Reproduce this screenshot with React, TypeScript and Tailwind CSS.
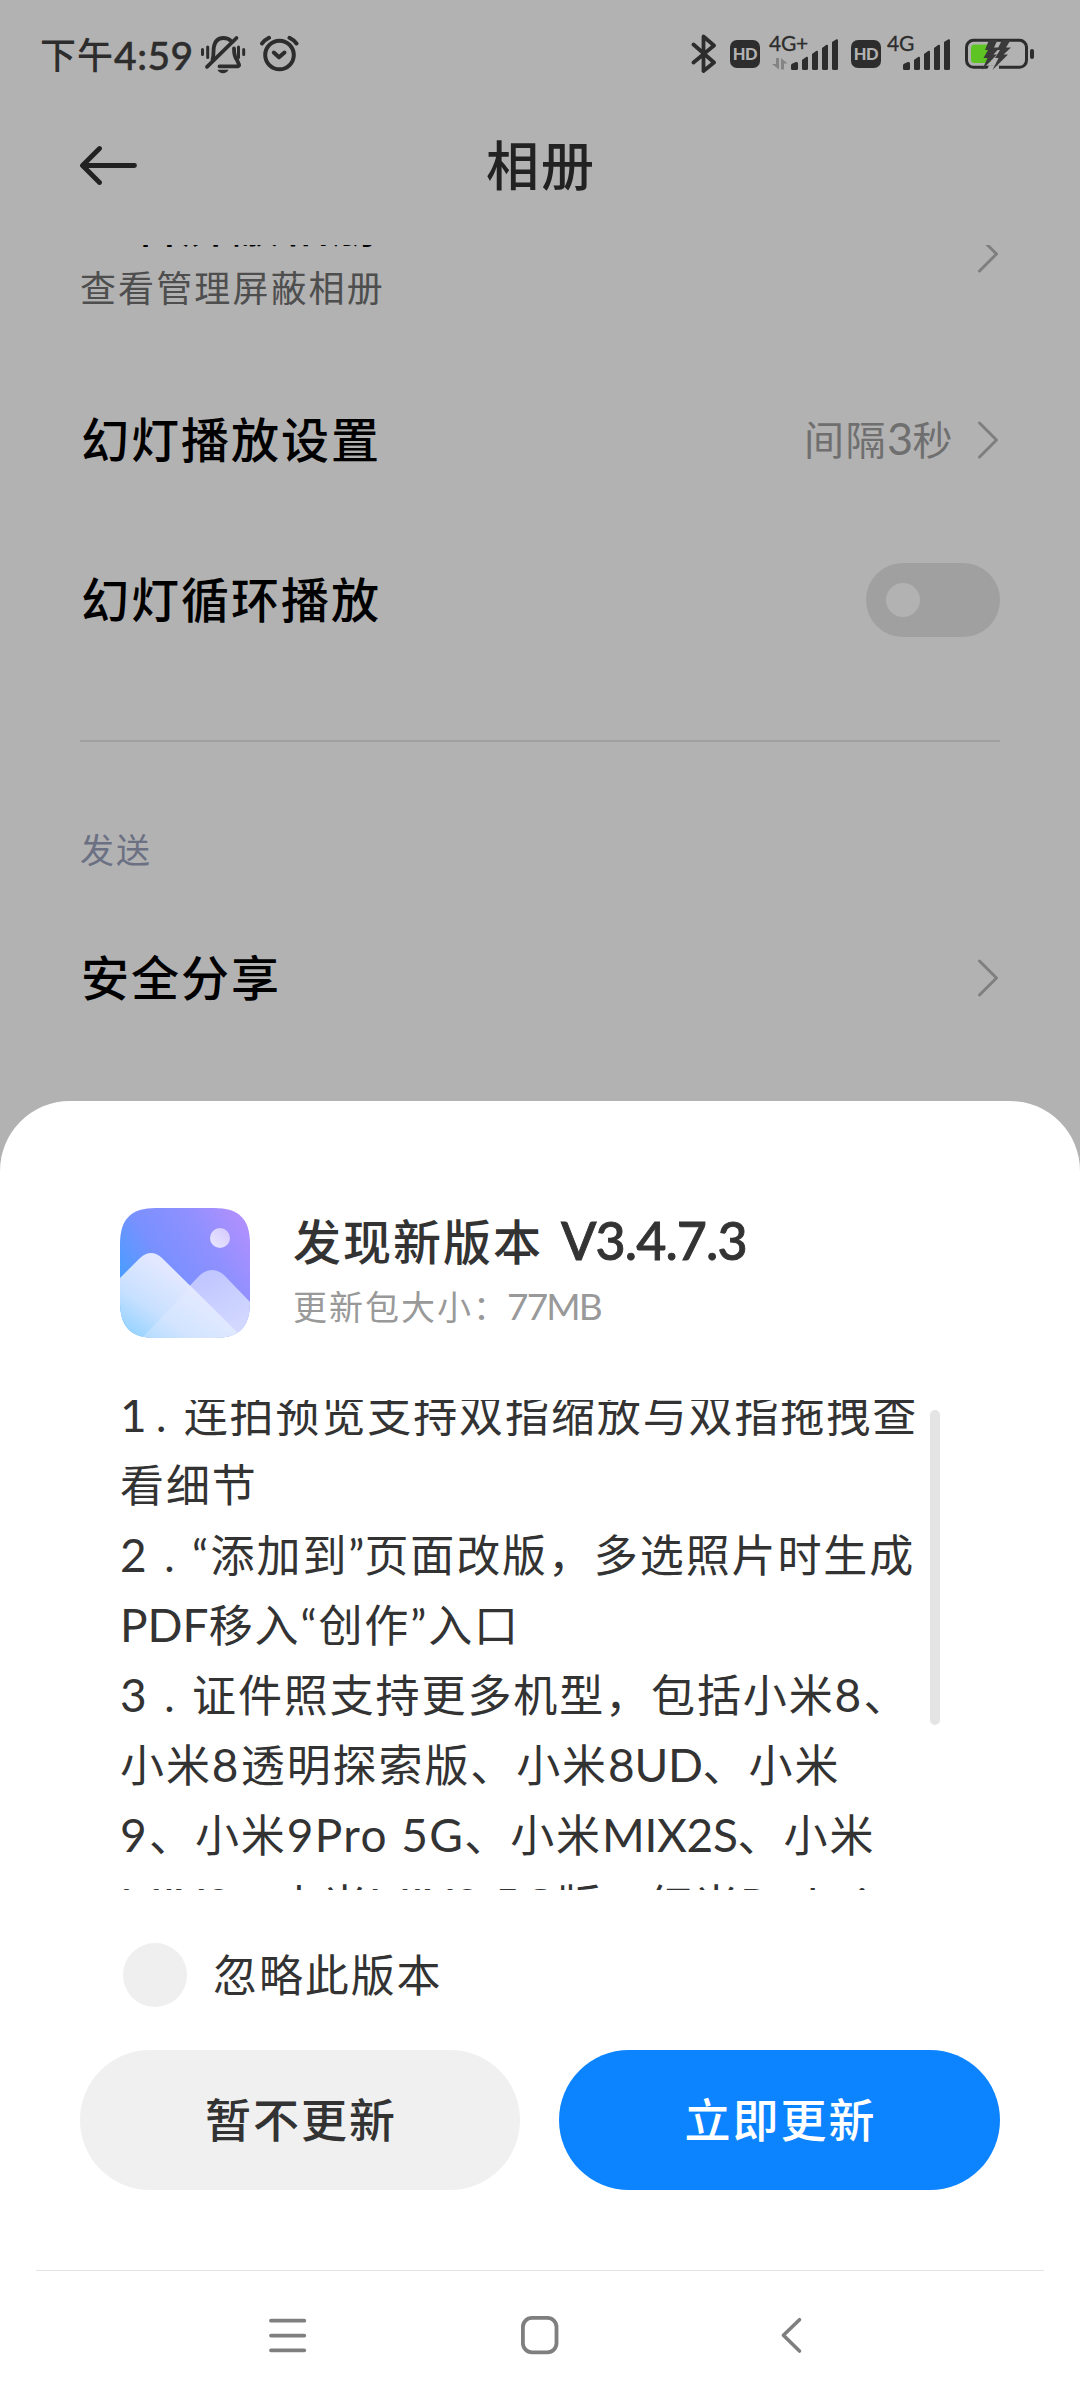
import React from "react";

const chevron = (
  <svg width="24" height="40" viewBox="0 0 24 40" className="block" fill="none" stroke="#7f7f7f" strokeWidth="3" strokeLinecap="round" strokeLinejoin="round">
    <path d="M3.500 3 L20.500 20 L3.500 37" />
  </svg>
);

function Signal() {
  return (
    <svg width="48" height="31" viewBox="0 0 48 31" className="block" fill="#2d2d2d">
      <path d="M0 26.500 Q0 25 1.500 24.500 L5 23 Q7 22.500 7 24.500 V29.500 Q7 31 5.500 31 H1.500 Q0 31 0 29.500Z" />
      <path d="M11 21 L15.500 17.800 Q17 17.500 17 19 V29.500 Q17 31 15.500 31 H12.500 Q11 31 11 29.500Z" />
      <path d="M21 15 L25.500 11.800 Q27 11.500 27 13 V29.500 Q27 31 25.500 31 H22.500 Q21 31 21 29.500Z" />
      <path d="M31 9 L35.500 5.800 Q37 5.500 37 7 V29.500 Q37 31 35.500 31 H32.500 Q31 31 31 29.500Z" />
      <path d="M41 3 L45.500 0.300 Q47 0 47 1.500 V29.500 Q47 31 45.500 31 H42.500 Q41 31 41 29.500Z" />
    </svg>
  );
}

function HdBadge() {
  return (
    <span className="flex h-[28px] w-[30px] items-center justify-center rounded-[7px] bg-[#2d2d2d] text-[16.5px] font-black leading-none tracking-[-0.5px] text-[#b2b2b2]">
      HD
    </span>
  );
}

function StatusBar() {
  return (
    <div className="flex h-[110px] shrink-0 items-start text-[#2d2d2d]">
      <div className="ml-[40px] mt-[30px] flex h-[50px] w-[154px] items-center whitespace-nowrap font-medium leading-none">
        <span className="text-[36px] tracking-[1px]">下午</span>
        <span className="text-[39px] tracking-[0.5px] [-webkit-text-stroke:0.5px_#2d2d2d]">4:59</span>
      </div>
      <svg width="46" height="40" viewBox="0 0 46 40" className="ml-[6px] mt-[35px] block" fill="none" stroke="#2d2d2d" strokeWidth="3.800" strokeLinecap="round" strokeLinejoin="round">
        <path d="M2.500 14.500v5M7.700 12v10.500M38.500 12v10.500M43.700 14.500v5" strokeWidth="3" />
        <path d="M12.500 24.500c.8-2 1-4 1-7.500C13.500 8 17 3 23.500 3c3 0 5.600 1 7.500 3" />
        <path d="M34 13.500c0 6 .5 8.500 3 11.500l2 4.500a1.300 1.300 0 0 1-1 1.800H19.500" />
        <path d="M36.500 3 7 31.800" />
        <path d="M17.500 34.800h11c-1 2.200-3 3.400-5.500 3.400s-4.500-1.200-5.500-3.400z" fill="#2d2d2d" stroke="none" />
      </svg>
      <svg width="40" height="38" viewBox="0 0 40 38" className="ml-[13px] mt-[35px] block" fill="none" stroke="#2d2d2d" strokeWidth="4" strokeLinecap="round" strokeLinejoin="round">
        <circle cx="20.500" cy="20" r="14.300" />
        <path d="M14.800 17.500 20 22.300 25.500 17.500" />
        <path d="M3 8.500C5.500 5.500 7.500 4 10 2.800M37.500 8.500C35 5.500 33 4 30.500 2.800" />
      </svg>
      <svg width="26" height="40" viewBox="0 0 26 40" className="ml-[392px] mt-[34px] block" fill="none" stroke="#2d2d2d" strokeWidth="3.800" strokeLinecap="round" strokeLinejoin="round">
        <path d="M2.500 10.500 23 28.500 12.500 37V2.500L23 11.500 2.500 28.500" />
      </svg>
      <div className="ml-[13px] mt-[40px]"><HdBadge /></div>
      <div className="relative ml-[9px] mt-[34px] h-[40px] w-[70px]">
        <span className="absolute left-0 top-[-1px] whitespace-nowrap text-[21px] leading-[20px] tracking-[-0.3px] [-webkit-text-stroke:0.3px_#2d2d2d]">4G+</span>
        <svg width="16" height="12" viewBox="0 0 16 12" className="absolute left-[3px] top-[24px]" fill="#848484">
          <path d="M4 0H7V11.500L0 6H4ZM9 11.500V0L15.500 5.500H12V11.500Z" />
        </svg>
        <div className="absolute left-[22px] top-[5px]"><Signal /></div>
      </div>
      <div className="ml-[12px] mt-[40px]"><HdBadge /></div>
      <div className="relative ml-[6px] mt-[34px] h-[40px] w-[66px]">
        <span className="absolute left-0 top-[-1px] whitespace-nowrap text-[21px] leading-[20px] tracking-[-0.3px] [-webkit-text-stroke:0.3px_#2d2d2d]">4G</span>
        <div className="absolute left-[16px] top-[5px]"><Signal /></div>
      </div>
      <svg width="70" height="34" viewBox="0 0 70 34" className="ml-[12px] mt-[37px] block">
        <rect x="1.500" y="3.300" width="60" height="27" rx="7" fill="none" stroke="#2d2d2d" strokeWidth="3" />
        <rect x="6" y="7.500" width="20" height="18.500" rx="3.500" fill="#5ec424" />
        <rect x="65" y="12" width="4" height="10" rx="2" fill="#2d2d2d" />
        <path d="M24 28.500H34V32.500H22Z" fill="#b2b2b2" />
        <path d="M24 3H32.500L29 10.500H35L28.500 17.500H32L17 33L22.500 21H18.500L23 13H20Z" fill="#3a3a3a" />
        <path d="M37 3H45.500L41 10.500H46L38.500 17.500H43L27.500 33L33.500 21H30L35 13H32Z" fill="#3a3a3a" />
      </svg>
    </div>
  );
}

function Settings() {
  return (
    <div className="mt-[25px] flex h-[890px] flex-col overflow-hidden px-[80px]">
      <div className="-mt-[38px] flex h-[122px] shrink-0 justify-between">
        <div className="flex flex-col">
          <span className="h-[44px] whitespace-nowrap pl-px text-[48px] font-medium leading-[34px] tracking-[2px] text-black">查看屏蔽相册</span>
          <span className="mt-[15px] whitespace-nowrap text-[36px] leading-[44px] tracking-[2.1px] text-[#4e4e4e]">查看管理屏蔽相册</span>
        </div>
        <div className="mt-[27px]">{chevron}</div>
      </div>
      <div className="mt-[31px] flex h-[160px] shrink-0 items-center justify-between">
        <span className="pl-px text-[48px] font-medium tracking-[2px] text-black">幻灯播放设置</span>
        <div className="flex items-center gap-[22px]">
          <span className="text-[40px] tracking-[1.5px] text-[#6f6f6f]">间隔<span className="text-[45px] leading-none tracking-[-0.7px]">3</span>秒</span>
          {chevron}
        </div>
      </div>
      <div className="flex h-[160px] shrink-0 items-center justify-between">
        <span className="pl-px text-[48px] font-medium tracking-[2px] text-black">幻灯循环播放</span>
        <span className="flex h-[74px] w-[134px] items-center rounded-full bg-[#a0a0a0] pl-[20px]">
          <span className="h-[34px] w-[34px] rounded-full bg-[#b2b2b2]" />
        </span>
      </div>
      <div className="mt-[60px] h-[2px] shrink-0 bg-[#a0a0a0]" />
      <div className="mt-[80px] h-[56px] shrink-0 text-[34px] leading-[56px] tracking-[2px] text-[#6b7083]">发送</div>
      <div className="mt-[20px] flex h-[160px] shrink-0 items-center justify-between">
        <span className="pl-px text-[48px] font-medium tracking-[2px] text-black">安全分享</span>
        {chevron}
      </div>
    </div>
  );
}

function GalleryIcon() {
  return (
    <svg width="130" height="130" viewBox="0 0 130 130" className="block shrink-0">
      <defs>
        <linearGradient id="sky" x1="0" y1="0.650" x2="1" y2="0">
          <stop offset="0" stopColor="#3fa0ff" />
          <stop offset="0.350" stopColor="#7a90ff" />
          <stop offset="0.650" stopColor="#9090ff" />
          <stop offset="1" stopColor="#b890fd" />
        </linearGradient>
        <linearGradient id="front" x1="0" y1="1" x2="0.600" y2="0.400">
          <stop offset="0" stopColor="#88d0ff" />
          <stop offset="0.500" stopColor="#c8e0ff" />
          <stop offset="1" stopColor="#e2e8ff" />
        </linearGradient>
        <linearGradient id="back" x1="0" y1="0" x2="1" y2="1">
          <stop offset="0" stopColor="#b6bcff" />
          <stop offset="1" stopColor="#d6dcff" />
        </linearGradient>
        <linearGradient id="sun" x1="0" y1="1" x2="1" y2="0">
          <stop offset="0" stopColor="#e8e8ff" />
          <stop offset="1" stopColor="#d5c8ff" />
        </linearGradient>
        <clipPath id="tile">
          <path d="M36 0H94C119 0 130 11 130 36V94C130 119 119 130 94 130H36C11 130 0 119 0 94V36C0 11 11 0 36 0Z" />
        </clipPath>
      </defs>
      <g clipPath="url(#tile)">
        <rect width="130" height="130" fill="url(#sky)" />
        <circle cx="100" cy="30" r="10" fill="url(#sun)" />
        <path d="M20 130 L80 67 Q92 57 104 67 L130 94 V130Z" fill="url(#back)" />
        <path d="M0 70 L20 50 Q31 40 42 50 L117 124 L122 130 H0Z" fill="url(#front)" />
        <path d="M22 130 L71 78 L117 124 L122 130Z" fill="#ebedff" fillOpacity="0.300" />
      </g>
    </svg>
  );
}

/** Latin letters and digits, set slightly larger than the Chinese text around them. */
function Num({ children }: { children: string }) {
  return <span className="text-[46px] leading-none tracking-[2.3px]">{children}</span>;
}

function Word({ children }: { children: string }) {
  return <span className="text-[46px] leading-none tracking-[-0.3px]">{children}</span>;
}

function ReleaseNotes() {
  return (
    <div className="mt-[62px] flex h-[490px] justify-between overflow-hidden pl-[120px] pr-[140px]">
      <div className="-mt-[20px] whitespace-nowrap text-[44px] leading-[70px] tracking-[1.9px] *:h-[70px]">
        <p><span className="text-[46px] leading-none tracking-[-9px]">1</span><span className="inline-block w-[46px] pl-[3px] text-center">.</span>连拍预览支持双指缩放与双指拖拽查</p>
        <p>看细节</p>
        <p><Num>2</Num><span className="inline-block w-[43px] text-center">.</span><span className="tracking-[2.5px]">“</span>添加到<span className="tracking-[0px]">”</span>页面改版，多选照片时生成</p>
        <p><span className="text-[46px] leading-none tracking-[0px]">PDF</span>移入“创作”入口</p>
        <p><Num>3</Num><span className="inline-block w-[43px] text-center">.</span>证件照支持更多机型，包括小米<Num>8</Num>、</p>
        <p>小米<Num>8</Num>透明探索版、小米<Word>8UD</Word>、小米</p>
        <p><Num>9</Num>、小米<span className="text-[46px] leading-none tracking-[1.4px]">9Pro 5G</span>、小米<Word>MIX2S</Word>、小米</p>
        <p><Word>MIX3</Word>、小米<Word>MIX3</Word><span className="text-[46px] leading-none tracking-[1.6px]"> 5G</span>版、红米<span className="text-[46px] leading-none tracking-[0.3px]">Redmi</span></p>
      </div>
      <span className="mt-[10px] h-[315px] w-[10px] shrink-0 rounded-full bg-[#e4e4e4]" />
    </div>
  );
}

export default function App() {
  return (
    <div className="flex h-[2400px] w-[1080px] flex-col overflow-hidden bg-[#b2b2b2] font-['Lato','Noto_Sans_CJK_SC',sans-serif] text-[#333333]">
      <StatusBar />
      <header className="grid h-[110px] shrink-0 grid-cols-[1fr_auto_1fr] items-center px-[80px] text-[#222222]">
        <svg width="58" height="40" viewBox="0 0 58 40" className="block" fill="none" stroke="#222222" strokeWidth="4.800" strokeLinecap="round" strokeLinejoin="round">
          <path d="M54.500 20.500H3M19.500 3.500 2.500 20.500 19.500 37.500" />
        </svg>
        <h1 className="pl-[2px] text-[53px] font-medium leading-none tracking-[2px]">相册</h1>
      </header>
      <Settings />
      <section className="-mt-[34px] flex h-[1299px] shrink-0 flex-col rounded-t-[70px] bg-white">
        <div className="mt-[107px] flex h-[130px] shrink-0 pl-[120px]">
          <GalleryIcon />
          <div className="ml-[43px] whitespace-nowrap">
            <div className="mt-[2px] h-[64px] text-[48px] font-medium leading-[64px] tracking-[2px]">
              发现新版本<span className="ml-[18px] text-[52px] leading-none tracking-[-0.9px] [-webkit-text-stroke:0.9px_#333333]">V3.4.7.3</span>
            </div>
            <div className="mt-[9px] text-[34px] leading-[48px] tracking-[2px] text-[#999999]">
              更新包大小：<span className="ml-[-2px] text-[37px] leading-none tracking-[-1.8px]">77MB</span>
            </div>
          </div>
        </div>
        <ReleaseNotes />
        <div className="mt-[53px] flex h-[64px] shrink-0 items-center pl-[123px]">
          <span className="h-[64px] w-[64px] rounded-full bg-[#efefef]" />
          <span className="ml-[26px] text-[44px] leading-none tracking-[1.9px]">忽略此版本</span>
        </div>
        <div className="mt-[43px] flex h-[140px] shrink-0 justify-between px-[80px] text-[46px] font-medium">
          <button className="w-[440px] rounded-full bg-[#f0f0f0] pb-[2px] pl-[2px] tracking-[2px]">暂不更新</button>
          <button className="w-[441px] rounded-full bg-[#0d84ff] pb-[2px] pl-[2px] tracking-[2px] text-white">立即更新</button>
        </div>
        <div className="mx-[36px] mt-[80px] h-px shrink-0 bg-[#e4e4e4]" />
        <nav className="flex items-start pl-[268px] pt-[44px]">
          <svg width="40" height="42" viewBox="0 0 40 42" className="block" fill="none" stroke="#7f7f7f" strokeWidth="3.800" strokeLinecap="round">
            <path d="M3 5.700H36.300M3 20.600H36.300M3 35.300H36.300" />
          </svg>
          <svg width="40" height="42" viewBox="0 0 40 42" className="ml-[212px] block" fill="none" stroke="#7f7f7f" strokeWidth="3.800">
            <rect x="2.900" y="2.900" width="33.600" height="34.400" rx="9" />
          </svg>
          <svg width="24" height="42" viewBox="0 0 24 42" className="ml-[220px] block" fill="none" stroke="#7f7f7f" strokeWidth="3.600" strokeLinecap="round" strokeLinejoin="round">
            <path d="M19.500 4.700 3.400 20.300 19.500 36" />
          </svg>
        </nav>
      </section>
    </div>
  );
}
